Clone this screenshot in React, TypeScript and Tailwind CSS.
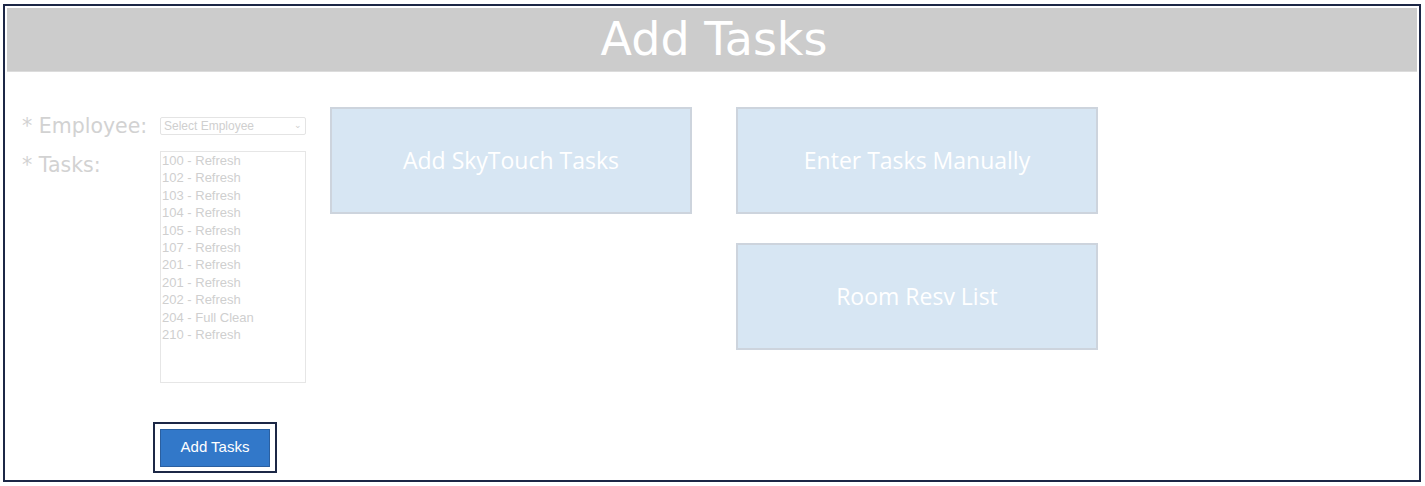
import React from 'react'

const tasks = [
    '100 - Refresh',
    '102 - Refresh',
    '103 - Refresh',
    '104 - Refresh',
    '105 - Refresh',
    '107 - Refresh',
    '201 - Refresh',
    '201 - Refresh',
    '202 - Refresh',
    '204 - Full Clean',
    '210 - Refresh',
]

const ActionBox = ({ label }: { label: string }) => (
    <div className="w-[362px] h-[107px] bg-[#d7e6f3] border-2 border-[#cdd4dd] flex items-center justify-center text-white text-[23px] font-['Open_Sans',sans-serif]">
        {label}
    </div>
)

const App = () => {
    return (
        <div className="bg-white w-[1425px] h-[486px] pt-[4px] pl-[3px]">
            <div className="w-[1418px] h-[478px] border-2 border-[#1c2746] p-[2px]">
                <div className="h-[64px] bg-[#cccccc] border-b border-[#dcdcdc] flex items-center justify-center">
                    <h1 className="text-white text-[46px] leading-none font-['DejaVu_Sans',sans-serif] mt-[-2px] ml-[4px]">
                        Add Tasks
                    </h1>
                </div>
                <div className="flex pl-[15px]">
                    {/* form column */}
                    <div className="flex flex-col w-[308px] pt-[45px]">
                        <div className="flex items-center h-[18px]">
                            <span className="w-[138px] text-[20.5px] leading-[28px] text-[#d2d2d2] font-['DejaVu_Sans',sans-serif]">
                                * Employee:
                            </span>
                            <div className="w-[146px] h-[18px] border border-[#e4e4e4] rounded-[2px] flex items-center justify-between px-[3px] text-[12px] text-[#cfcfcf] font-['Liberation_Sans',sans-serif]">
                                <span>Select Employee</span>
                                <span className="text-[9px]">&#8964;</span>
                            </div>
                        </div>
                        <div className="flex mt-[16px]">
                            <span className="w-[138px] text-[20.5px] leading-[28px] text-[#d2d2d2] font-['DejaVu_Sans',sans-serif]">
                                * Tasks:
                            </span>
                            <div className="w-[146px] h-[232px] border border-[#e6e6e6] px-[1px] text-[13px] leading-[17.4px] text-[#cfcfcf] font-['Liberation_Sans',sans-serif]">
                                {tasks.map((task, index) => (
                                    <div key={index}>{task}</div>
                                ))}
                            </div>
                        </div>
                        <div className="mt-[39px] ml-[131px] w-[124px] h-[51px] border-2 border-[#1c2746] flex items-center justify-center">
                            <button className="w-[110px] h-[38px] bg-[#3278c9] border border-[#2a5fa0] text-white text-[15px] font-['Liberation_Sans',sans-serif]">
                                Add Tasks
                            </button>
                        </div>
                    </div>
                    {/* action boxes */}
                    <div className="pt-[35px] flex gap-[44px]">
                        <ActionBox label="Add SkyTouch Tasks" />
                        <div className="flex flex-col gap-[29px]">
                            <ActionBox label="Enter Tasks Manually" />
                            <ActionBox label="Room Resv List" />
                        </div>
                    </div>
                </div>
            </div>
        </div>
    )
}

export default App
